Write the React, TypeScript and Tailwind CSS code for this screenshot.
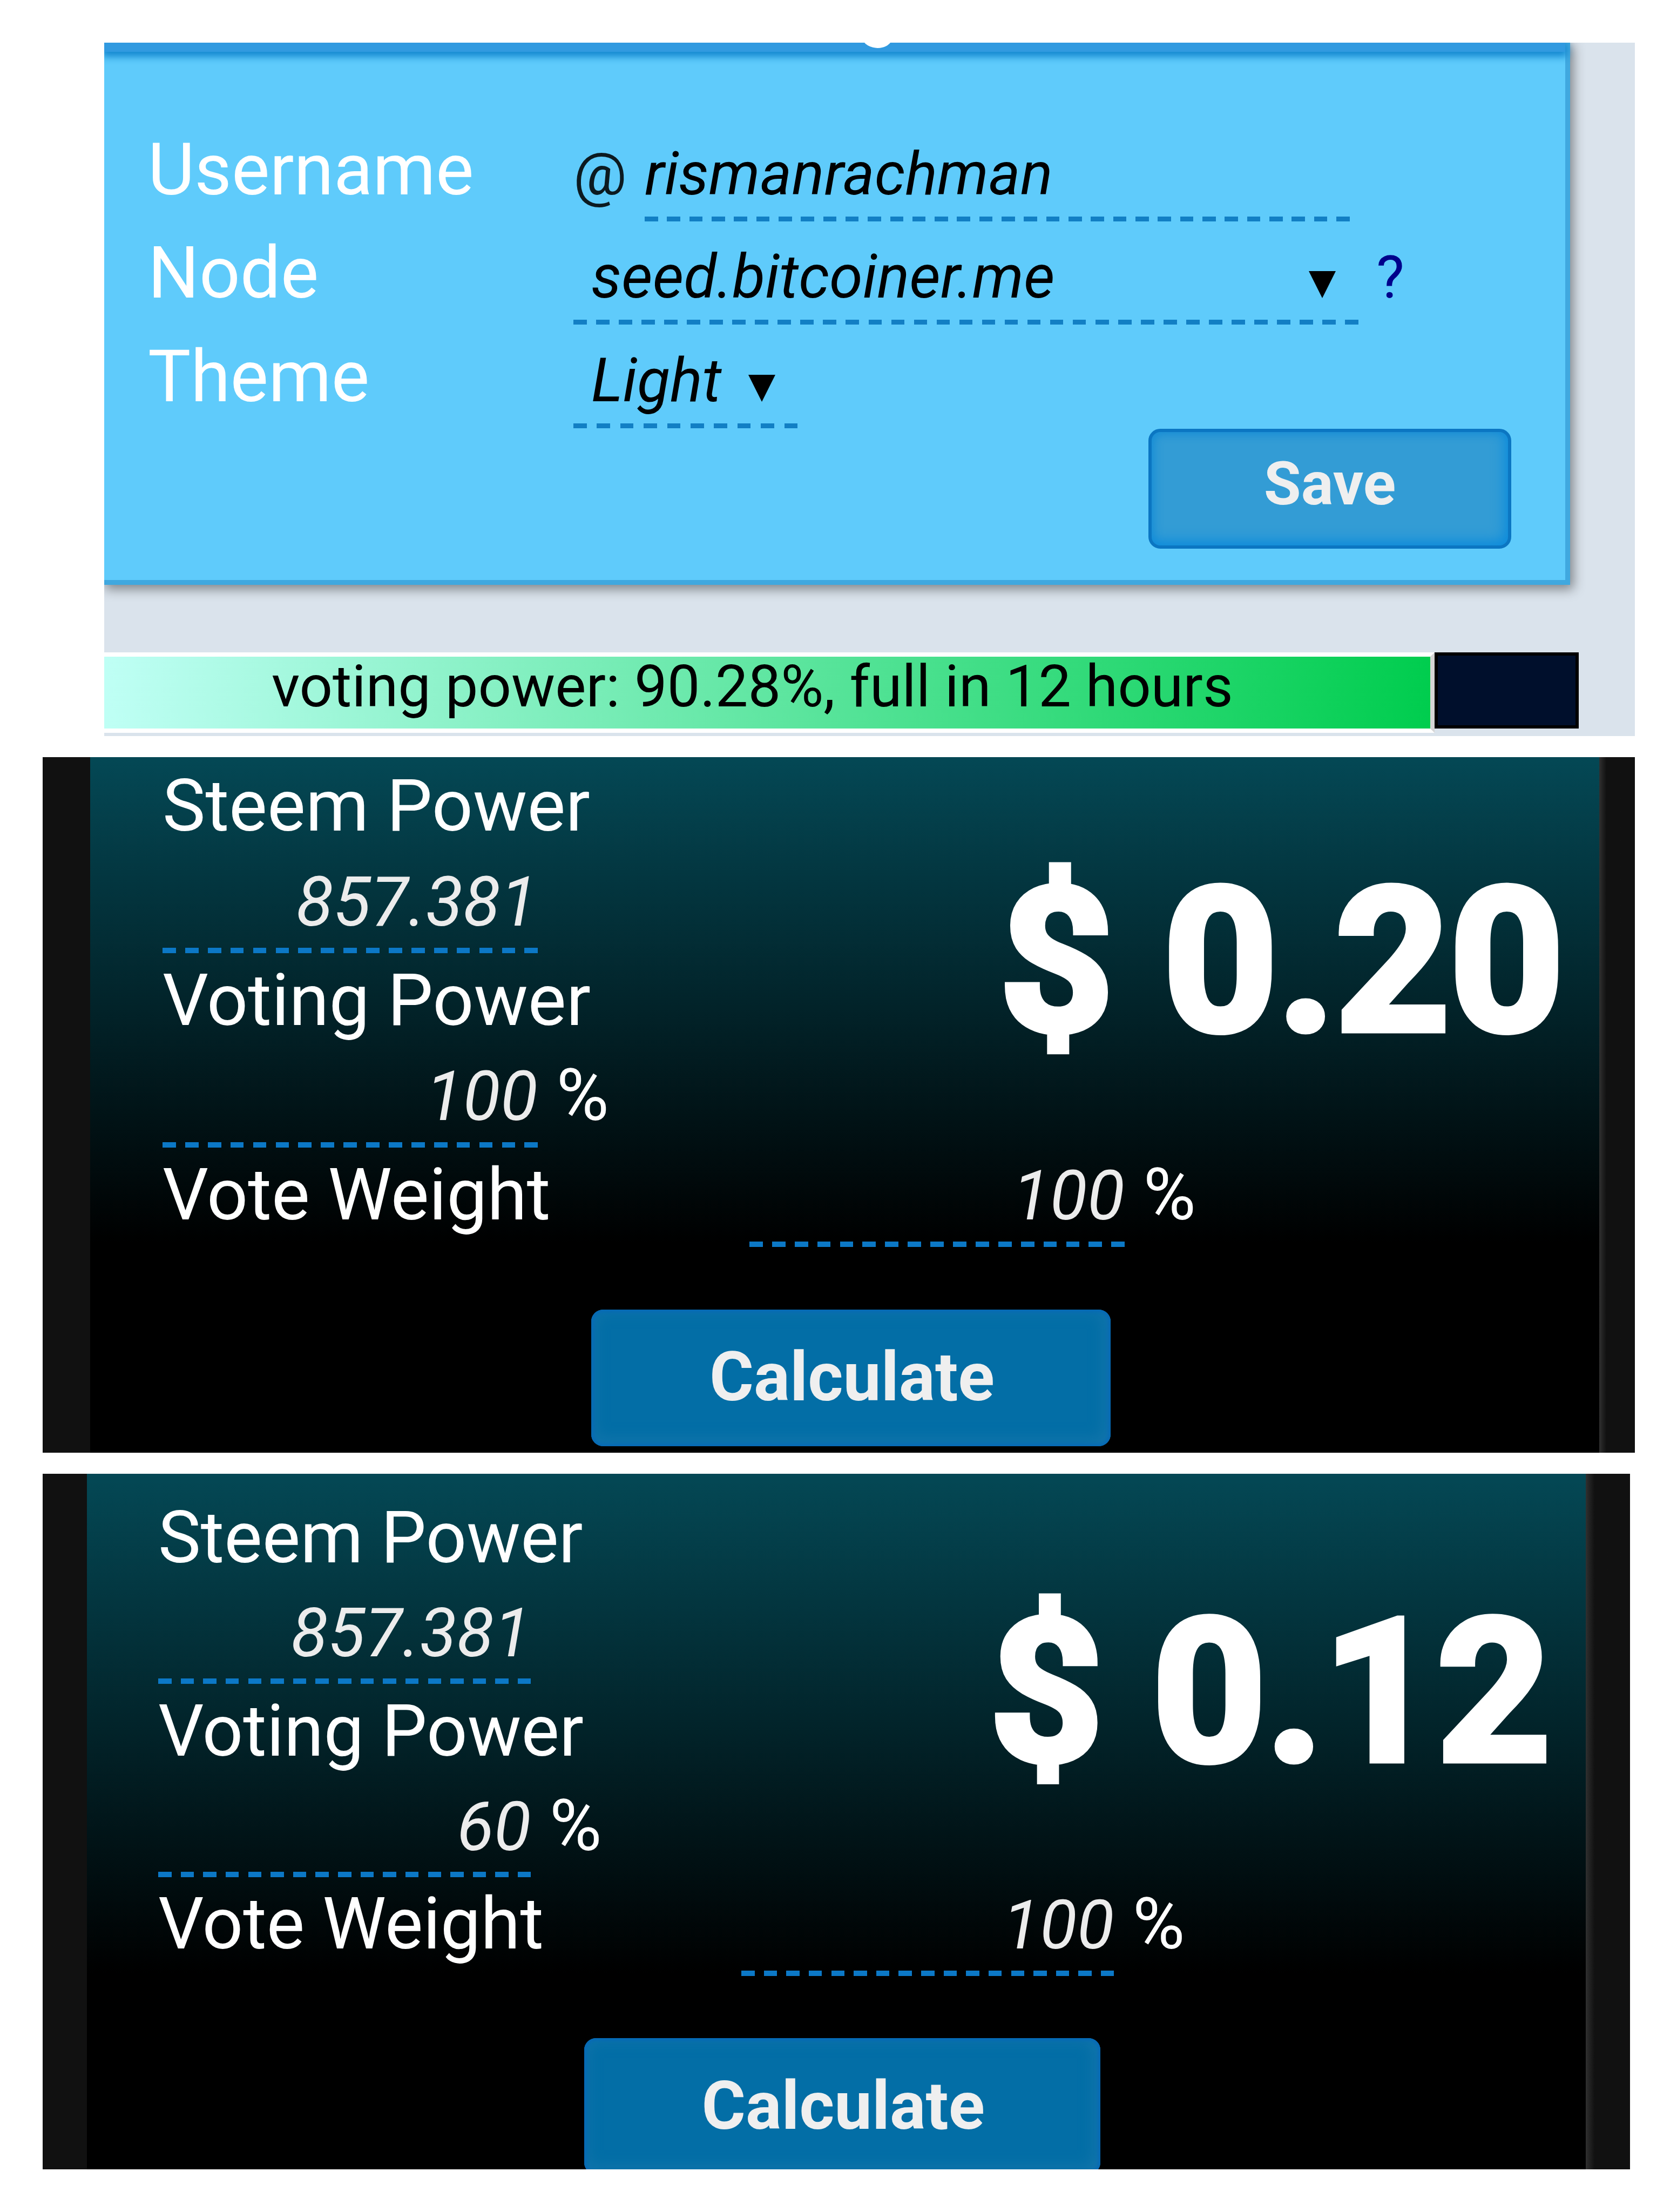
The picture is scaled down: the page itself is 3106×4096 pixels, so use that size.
import type { ReactNode } from "react";

function Caret() {
  return (
    <svg viewBox="0 0 50 50" className="w-[50px] h-[50px] mt-7 fill-black">
      <polygon points="0,0 50,0 25,50" />
    </svg>
  );
}

function SettingsRow({ label, children }: { label: string; children: ReactNode }) {
  return (
    <div className="flex items-baseline h-[163px]">
      <span className="w-[788px] text-[133px] leading-[150px] text-white">
        {label}
      </span>
      {children}
    </div>
  );
}

function Settings() {
  return (
    <section className="ml-[193px] w-[2835px] h-[1284px] bg-[#dae3ec] overflow-hidden">
      {/* card */}
      <div className="w-[2715px] h-[1004px] bg-[#5fcbfb] border-r-[9px] border-b-[9px] border-[#40a8df] shadow-[4px_6px_20px_2px_rgba(0,0,0,0.42)]">
        <div className="h-[17px] bg-[#319ae0] pr-[112px] text-center overflow-hidden shadow-[0_5px_14px_4px_#1488d0]">
          <h2 className="-mt-[138px] text-[133px] leading-[150px] text-white">
            Settings
          </h2>
        </div>

        <div className="flex flex-col gap-[28.5px] pt-[143.5px] pl-[81px]">
          <SettingsRow label="Username">
            <span className="w-[132px] text-[110px] leading-[150px] text-[#0c1a20]">@</span>
            <div className="w-[1306px]">
              <div className="text-[111.6px] leading-[150px] italic">
                rismanrachman
              </div>
              <div className="mt-1 h-[9px] bg-[repeating-linear-gradient(90deg,#127fc4_0_24.6px,transparent_24.6px_41.32px)]" />
            </div>
          </SettingsRow>

          <SettingsRow label="Node">
            <div className="w-[1454px]">
              <div className="flex items-center justify-between pl-[33px] pr-[42px] text-[112px] leading-[150px] italic">
                seed.bitcoiner.me
                <Caret />
              </div>
              <div className="mt-1 h-[9px] bg-[repeating-linear-gradient(90deg,#127fc4_0_24.6px,transparent_24.6px_42.04px)]" />
            </div>
            <a className="ml-[33px] text-[110px] leading-[150px] text-[#00008b]">?</a>
          </SettingsRow>

          <SettingsRow label="Theme">
            <div className="w-[416px]">
              <div className="flex items-center justify-between pl-[33px] pr-[42px] text-[112px] leading-[150px] italic">
                Light
                <Caret />
              </div>
              <div className="mt-1 h-[9px] bg-[repeating-linear-gradient(90deg,#127fc4_0_24.6px,transparent_24.6px_43.4px)]" />
            </div>
          </SettingsRow>
        </div>

        <button className="block ml-[1934px] mt-2 w-[672px] h-[222px] pb-[18px] rounded-[22px] border-[6px] border-[#0b76c2] bg-[#339cd5] text-[112px] font-bold text-[#efefef] shadow-[inset_-6px_-8px_24px_#0d8cdc,inset_4px_4px_16px_#1f8fd2]">
          Save
        </button>
      </div>

      {/* voting power bar */}
      <div className="flex mt-[125px] h-[149px] w-[2731px]">
        <div className="w-[2464px] border-y-8 border-r-8 border-y-white border-r-[#d5d5d5] bg-linear-to-r/srgb from-[#bffff5] to-[#00cd4e] pl-[310px] text-[108px] leading-[110px] whitespace-nowrap">
          voting power: 90.28%, full in 12 hours
        </div>
        <div className="w-[267px] h-[141px] border-6 border-black bg-[#000f2c]" />
      </div>
    </section>
  );
}

// Everything inside is sized in em, so the text size of the section sets its scale
function Field({ value }: { value: string }) {
  return (
    <div className="w-[6.95em]">
      <div className="text-[1.27em] leading-[1.22] italic text-right text-[#ececec]">
        {value}
      </div>
      <div className="mt-[0.06em] h-[0.1em] bg-[repeating-linear-gradient(90deg,#0c78c6_0_0.247em,transparent_0.247em_0.419em)]" />
    </div>
  );
}

function Label({ text }: { text: string }) {
  return (
    <div className="text-[1.337em] leading-[1.122] whitespace-nowrap">{text}</div>
  );
}

function Percent() {
  return <span className="ml-[0.26em] text-[1.33em] leading-[1.128]">%</span>;
}

type CalculatorProps = {
  votingPower: string;
  amount: string;
  frame: string;
  screen: string;
};

function Calculator({ votingPower, amount, frame, screen }: CalculatorProps) {
  return (
    <section className={`flex ml-[79px] bg-[#111] text-white overflow-hidden ${frame}`}>
      <div className={`bg-linear-to-b/srgb from-[#044855] to-black ${screen}`}>
        <div className="flex h-[7.2em]">
          <div className="w-[15.5em]">
            <Label text="Steem Power" />
            <div className="flex items-baseline h-[2.1em] pt-[0.26em]">
              <Field value="857.381" />
            </div>
            <Label text="Voting Power" />
            <div className="flex items-baseline h-[2.1em] pt-[0.26em]">
              <Field value={votingPower} />
              <Percent />
            </div>
          </div>
          <div className="pt-[1.79em]">
            <div className="text-[3.69em] leading-none font-bold whitespace-nowrap [-webkit-text-stroke:0.035em_white]">
              {amount}
            </div>
          </div>
        </div>

        <div className="flex items-baseline">
          <div className="w-[10.87em]">
            <Label text="Vote Weight" />
          </div>
          <Field value="100" />
          <Percent />
        </div>

        <div className="pl-[7.94em] pt-[1.16em]">
          <button className="block w-[9.62em] h-[2.53em] pl-[0.04em] rounded-[0.22em] bg-[#036ea6] shadow-[inset_0_0_0.08em_0.04em_#0568b8,inset_-0.04em_-0.04em_0.3em_0.04em_#1878ad]">
            <span className="text-[1.253em] font-bold text-[#efefef]">Calculate</span>
          </button>
        </div>
      </div>
      <div className="grow bg-linear-to-r from-[#303030] to-[#111] to-20%" />
    </section>
  );
}

export default function App() {
  return (
    <main className="flex flex-col gap-[39px] w-[3106px] h-[4096px] pt-[79px] bg-white font-['Roboto',sans-serif] text-black">
      <Settings />
      <Calculator
        votingPower="100"
        amount="$ 0.20"
        frame="w-[2949px] h-[1288px] pl-[88px] text-[100px]"
        screen="w-[2795px] pl-[134px] pt-[16px] to-[900px]"
      />
      <Calculator
        votingPower="60"
        amount="$ 0.12"
        frame="w-[2940px] h-[1288px] pl-[82px] text-[99.35px]"
        screen="w-[2776px] pl-[132px] pt-[44px] to-[925px]"
      />
    </main>
  );
}
